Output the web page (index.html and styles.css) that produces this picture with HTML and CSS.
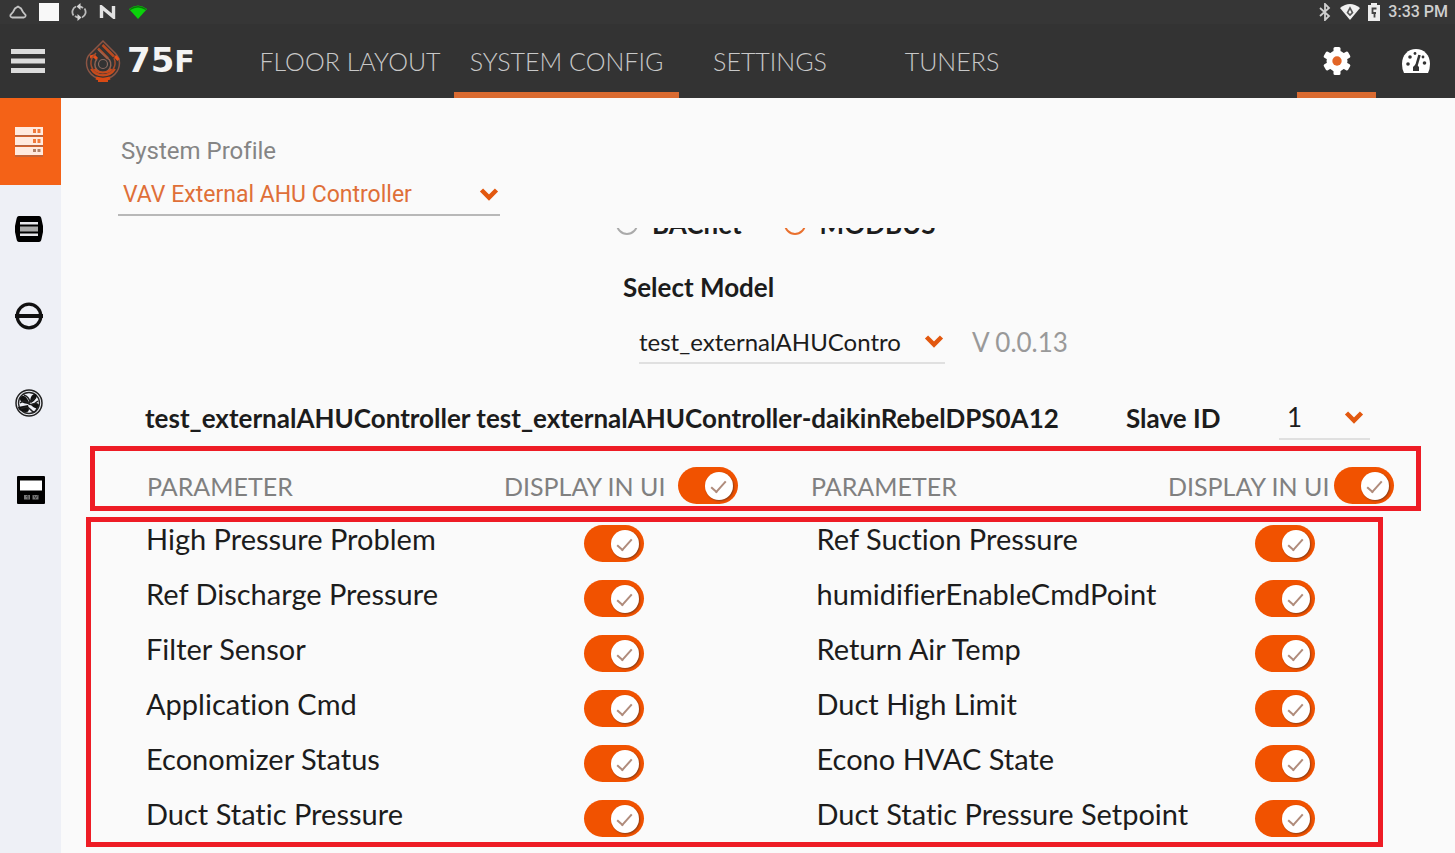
FILE: index.html
```html
<!DOCTYPE html>
<html lang="en">
<head>
<meta charset="utf-8">
<meta name="viewport" content="width=device-width, initial-scale=1">
<title>75F System Config</title>
<link rel="stylesheet" href="styles.css">
</head>
<body>
<div class="app">
  <div class="status">
    <div class="status-left">
      <svg width="18" height="14" viewBox="0 0 18 14" fill="none" stroke="#c4c4c4" stroke-width="1.800"><path d="M3 12.500h12q2-.5 1.500-2.500L14 7 12 3.500 9 1.500 6 3.500 4 7 1.500 10Q1 12 3 12.500z"/></svg>
      <svg width="20" height="18" viewBox="0 0 20 18"><path fill="#f8f8f8" d="M0 0h20v18H0z"/></svg>
      <svg width="16" height="20" viewBox="0 0 16 20"><path d="M5 4.500a6 6 0 0 0-2.500 9M11 15.500a6 6 0 0 0 2.500-9M8 4.500a6 6 0 0 1 4 1.500M8 15.500a6 6 0 0 1-4-1.500" fill="none" stroke="#bbb" stroke-width="1.800"/><path fill="#d5d5d5" d="M9.500 1v7L5.500 4.500zM6.500 12v7l4-3.500z"/></svg>
      <svg width="18" height="14" viewBox="0 0 18 14" fill="none" stroke="#e2e2e2" stroke-width="3.400"><path d="M2.500 13V2l12 10V1"/></svg>
      <svg width="18" height="14" viewBox="0 0 18 14"><path fill="#0bd10b" d="M0 4Q9-3 18 4L9 14z"/><path d="M1 4.500Q9-1 17 4.500" fill="none" stroke="#087808" stroke-width="1.500"/></svg>
    </div>
    <div class="status-right">
      <svg width="14" height="18" viewBox="0 0 14 18" fill="none" stroke="#d0d0d0" stroke-width="1.800"><path d="M2 5l9 8-4 4V1l4 4-9 8"/></svg>
      <svg width="20" height="16" viewBox="0 0 20 16"><path fill="#f0f0f0" d="M0 4Q10-4 20 4L10 16z"/><path fill="none" stroke="#555" stroke-width="1.600" d="M10 4l2.500 4.500L10 11 7.500 8.500z"/></svg>
      <svg width="12" height="18" viewBox="0 0 12 18"><path fill="#ececec" d="M3 0h6v2h3v16H0V2h3z"/><path fill="none" stroke="#444" stroke-width="1.800" d="M8.500 5.500H4.500V10H8M6.500 10v4.500"/></svg>
      <span class="clock">3:33 PM</span>
    </div>
  </div>

  <header class="bar">
    <button class="menu" type="button" aria-label="Menu">
      <svg width="34" height="24" viewBox="0 0 34 24" fill="#dcdcdc"><path d="M0 0h34v5H0zM0 9.500h34v5H0zM0 19h34v5H0z"/></svg>
    </button>
    <div class="brand">
      <svg width="36" height="44" viewBox="0 0 36 44" fill="none">
        <path d="M18 2L4.500 15.500Q1.500 18.500 1.500 24C1.500 33 9 40 18 40s16.500-7 16.500-16q0-5.500-4-9.500z" stroke="#8c5544" stroke-width="1.500"/>
        <path d="M13 9.500l10 10M17.500 6L29 17.500" stroke="#b94a21" stroke-width="2.500"/>
        <path d="M5 18l4-1 3 3M30 17l3.500 4" stroke="#e8501a" stroke-width="3"/>
        <path d="M11 14l-4 5a12 12 0 1 0 22 0" stroke="#a44c2c" stroke-width="1.500"/>
        <path d="M12 20a8 8 0 1 0 12.500 1L13.500 11" stroke="#936352" stroke-width="1.500"/>
        <circle cx="18" cy="25" r="4.500" stroke="#8c6d63" stroke-width="1.200"/>
        <path d="M6 30q4 6.500 12 6.500T30 30M9.500 30q3 3.500 8.500 3.500T26.500 30" stroke="#c94a1b" stroke-width="2"/>
        <path d="M11 39q7 2.500 14 0M13 41.500h10" stroke="#d84a14" stroke-width="3"/>
      </svg>
      <span class="brand-name">75<span class="brand-f">F</span></span>
    </div>
    <nav class="tabs">
      <a class="tab" href="#floor">FLOOR LAYOUT</a>
      <a class="tab tab-wide active" href="#config">SYSTEM CONFIG</a>
      <a class="tab tab-narrow" href="#settings">SETTINGS</a>
      <a class="tab tab-narrow" href="#tuners">TUNERS</a>
    </nav>
    <div class="tools">
      <button class="tool active" type="button" aria-label="Configuration">
        <svg width="28" height="28" viewBox="0 0 28 28"><g fill="#fff"><circle cx="14" cy="14" r="10.500"/><rect x="10.500" y="0" width="7" height="28" rx="1.500"/><rect x="10.500" y="0" width="7" height="28" rx="1.500" transform="rotate(60 14 14)"/><rect x="10.500" y="0" width="7" height="28" rx="1.500" transform="rotate(120 14 14)"/></g><circle cx="14" cy="14" r="4.700" fill="#e26526"/></svg>
      </button>
      <button class="tool" type="button" aria-label="Dashboard">
        <svg width="28" height="24" viewBox="0 0 28 24"><path fill="#fff" d="M2 24Q0 20 0 15C0 6 6 0 14 0s14 6 14 15q0 5-2 9z"/><g fill="#333"><circle cx="6" cy="15" r="1.800"/><circle cx="8" cy="8" r="1.800"/><circle cx="13" cy="4.500" r="1.400"/><circle cx="22.500" cy="14" r="1.800"/><circle cx="21" cy="8" r="1.400"/><path d="M11 22v-4l3-3 3 3v4z"/></g><path d="M14 18l3.500-12" stroke="#333" stroke-width="2.600"/></svg>
      </button>
    </div>
  </header>

  <div class="body">
    <nav class="side" aria-label="Sections">
      <button class="side-item active" type="button" aria-label="System">
        <svg width="28" height="30" viewBox="0 0 28 30"><g fill="#ffeade"><rect y="0" width="28" height="8"/><rect y="10" width="28" height="8"/><rect y="20" width="28" height="8"/></g><path d="M0 29h28M0 8.800h28M0 18.800h28" stroke="#b36442" stroke-width="1.500"/><g fill="#f07a3c"><path d="M18 2h3v4h-3zM22.500 2h3v4h-3zM18 12h3v4h-3zM22.500 12h3v4h-3z"/><path fill="#b08068" d="M18 22h3v3h-3zM22.500 22h3v3h-3z"/></g></svg>
      </button>
      <button class="side-item" type="button" aria-label="Module">
        <svg width="28" height="26" viewBox="0 0 28 26"><path d="M4 0h20q2 0 2.500 3l1.500 7v6l-1.500 7q-.5 3-2.500 3H4q-2 0-2.500-3L0 16v-6l1.500-7Q2 0 4 0z"/><path fill="#e8e8ec" d="M5 6h18v2.500H5zM5 17.500h18V20H5z"/><path fill="#aaa" d="M5 10.500h18v5H5z"/></svg>
      </button>
      <button class="side-item" type="button" aria-label="Damper">
        <svg width="28" height="28" viewBox="0 0 28 28" fill="none" stroke="#111"><circle cx="14" cy="14" r="11.800" stroke-width="3.200"/><path d="M0 14h28" stroke-width="4"/></svg>
      </button>
      <button class="side-item" type="button" aria-label="Fan">
        <svg width="28" height="28" viewBox="0 0 28 28" fill="none" stroke="#222"><circle cx="14" cy="14" r="13" stroke-width="1.500"/><circle cx="14" cy="14" r="10.500" stroke-width="1.300"/><path fill="#111" stroke="none" d="M14 13Q9 3 5 9q-1 5 8 6zM15 12q1-8 6-7 3 4-5 9zM16 15q8-3 8 2-2 5-8-1zM13 16q3 8-3 7-7-1-7-5z"/><path d="M5 14q5-4 8 0t10-2M6 20q6-4 10 1t6-2M9 6q5 2 6 7M20 9l-6 5" stroke-width="1.500"/></svg>
      </button>
      <button class="side-item side-item-last" type="button" aria-label="Meter">
        <svg width="28" height="28" viewBox="0 0 28 28"><rect width="28" height="28" rx="1"/><rect x="3" y="4.500" width="22" height="10" fill="#fff"/><path fill="#777" d="M7 19h6v4.500H7zM15.500 19h6v4.500h-6z"/><path d="M9 21l2-1.500v4M17 19.500l1.500 3 2-3" fill="none" stroke="#333"/></svg>
      </button>
    </nav>

    <main class="main">
      <div class="profile">
        <label class="profile-label" for="profile">System Profile</label>
        <div class="pick pick-profile">
          <select id="profile"><option>VAV External AHU Controller</option></select>
          <svg class="chev" width="20" height="14" viewBox="0 0 20 14"><path d="M2.500 3L10 10.500 17.500 3" fill="none" stroke="#e2580f" stroke-width="4.500"/></svg>
        </div>
      </div>

      <div class="scroll">
        <div class="protocol">
          <label class="radio"><input type="radio" name="protocol">BACnet</label>
          <label class="radio"><input type="radio" name="protocol" checked>MODBUS</label>
        </div>
        <div class="model">
          <label class="strong" for="model">Select Model</label>
          <div class="model-row">
            <div class="pick pick-model">
              <select id="model"><option>test_externalAHUContro</option></select>
              <svg class="chev" width="20" height="14" viewBox="0 0 20 14"><path d="M2.500 3L10 10.500 17.500 3" fill="none" stroke="#e2580f" stroke-width="4.500"/></svg>
            </div>
            <span class="version">V 0.0.13</span>
          </div>
        </div>
        <div class="device">
          <h2 class="strong device-name">test_externalAHUController test_externalAHUController-daikinRebelDPS0A12</h2>
          <label class="strong slave" for="slave">Slave ID</label>
          <div class="pick pick-slave">
            <select id="slave"><option>1</option></select>
            <svg class="chev" width="20" height="14" viewBox="0 0 20 14"><path d="M2.500 3L10 10.500 17.500 3" fill="none" stroke="#e2580f" stroke-width="4.500"/></svg>
          </div>
        </div>

        <div class="heads">
          <span>PARAMETER</span>
          <span class="all"><label for="all-a">DISPLAY IN UI</label><input class="toggle" id="all-a" type="checkbox" checked></span>
          <span>PARAMETER</span>
          <span class="all all-tight"><label for="all-b">DISPLAY IN UI</label><input class="toggle" id="all-b" type="checkbox" checked></span>
        </div>

        <div class="params">
          <label for="p1">High Pressure Problem</label><input class="toggle" id="p1" type="checkbox" checked>
          <label for="p2">Ref Suction Pressure</label><input class="toggle" id="p2" type="checkbox" checked>
          <label for="p3">Ref Discharge Pressure</label><input class="toggle" id="p3" type="checkbox" checked>
          <label for="p4">humidifierEnableCmdPoint</label><input class="toggle" id="p4" type="checkbox" checked>
          <label for="p5">Filter Sensor</label><input class="toggle" id="p5" type="checkbox" checked>
          <label for="p6">Return Air Temp</label><input class="toggle" id="p6" type="checkbox" checked>
          <label for="p7">Application Cmd</label><input class="toggle" id="p7" type="checkbox" checked>
          <label for="p8">Duct High Limit</label><input class="toggle" id="p8" type="checkbox" checked>
          <label for="p9">Economizer Status</label><input class="toggle" id="p9" type="checkbox" checked>
          <label for="p10">Econo HVAC State</label><input class="toggle" id="p10" type="checkbox" checked>
          <label for="p11">Duct Static Pressure</label><input class="toggle" id="p11" type="checkbox" checked>
          <label for="p12">Duct Static Pressure Setpoint</label><input class="toggle" id="p12" type="checkbox" checked>
        </div>
      </div>
    </main>
  </div>
</div>
</body>
</html>
```
FILE: styles.css
```css
* { box-sizing: border-box; }
body { margin: 0; background: #fafafa; color: #1c1c1c; font-family: Lato, "Liberation Sans", sans-serif; font-variant-ligatures: none; }
svg { display: block; flex: none; }
button { margin: 0; padding: 0; border: 0; background: none; font: inherit; }
.app { display: flex; flex-direction: column; min-height: 100vh; }

.status { display: flex; justify-content: space-between; align-items: center; height: 24px; padding: 0 7px 0 9px; background: #363636; }
.status-left { display: flex; align-items: center; gap: 12px; }
.status-right { display: flex; align-items: center; gap: 8px; }
.clock { color: #cfcfcf; font: 500 16px/24px Roboto, sans-serif; }

.bar { display: flex; align-items: stretch; height: 74px; background: #333; }
.menu { width: 34px; margin-left: 11px; }
.brand { display: flex; align-items: center; gap: 6px; width: 161px; margin-left: 40px; }
.brand-name { color: #f4f4f4; font: 700 34px/40px "DejaVu Sans", sans-serif; }
.brand-f { font-size: 30px; }
.tabs { display: flex; flex: 1; }
.tab { display: flex; align-items: center; justify-content: center; width: 208px; border-top: 6px solid transparent; border-bottom: 6px solid transparent; color: #c8c8c8; font-size: 25px; font-weight: 300; text-decoration: none; white-space: nowrap; }
.tab-wide { width: 225px; }
.tab-narrow { width: 182px; }
.tools { display: flex; }
.tool { display: flex; align-items: center; justify-content: center; width: 79px; border-top: 6px solid transparent; border-bottom: 6px solid transparent; }
.tab.active, .tool.active { border-bottom-color: #d96a30; }

.body { display: flex; flex: 1; }
.side { display: flex; flex-direction: column; width: 61px; background: #eef0f6; }
.side-item { display: flex; align-items: center; height: 87px; padding-left: 15px; }
.side-item-last { padding-left: 17px; }
.side-item.active { background: #f46217; }

.main { flex: 1; min-width: 0; }
.profile { display: flex; flex-direction: column; padding: 37px 0 12px 57px; font-family: Roboto, sans-serif; }
.profile-label { padding-left: 3px; color: #858585; font-size: 24px; line-height: 32px; }
.pick { position: relative; border-bottom: 2px solid #e0e0e0; }
.pick select { display: block; width: 100%; height: 100%; margin: 0; padding: 0; border: 0; background: none; appearance: none; color: inherit; font: inherit; }
.chev { position: absolute; right: 1px; top: 50%; margin-top: -7px; pointer-events: none; }
.pick-profile { width: 382px; height: 42px; margin-top: 7px; padding-left: 5px; border-color: #b8b8b8; color: #df6f38; font-size: 23px; }

.scroll { overflow: hidden; }
.protocol { display: flex; gap: 42px; margin-top: -22px; padding-left: 555px; font-size: 26px; font-weight: 700; line-height: 36px; }
.radio { display: flex; align-items: center; gap: 14px; }
.radio input { width: 22px; height: 22px; margin: 0; border: 2px solid #aaa; border-radius: 50%; appearance: none; }
.radio input:checked { border-color: #e9702e; }
.strong { margin: 0; font-size: 26px; font-weight: 700; line-height: 32px; white-space: nowrap; }
.model { padding: 29px 0 0 562px; }
.model-row { display: flex; align-items: center; gap: 27px; padding: 17px 0 0 16px; font-size: 26px; }
.pick-model { width: 306px; height: 44px; font-size: 24px; }
.version { color: #999; }
.device { display: flex; align-items: center; height: 82px; padding: 26px 0 0 84px; }
.device-name { width: 981px; }
.slave { width: 153px; }
.pick-slave { width: 91px; height: 44px; padding-left: 8px; font-size: 26px; }
.pick-slave .chev { right: 6px; }

.heads { display: grid; grid-template-columns: 357fr 307fr 357fr 248fr; align-items: center; height: 65px; margin: 0 34px 6px 29px; padding: 14px 0 0 52px; border: 5px solid #ee1c25; color: #808080; font-size: 25px; }
.all { display: flex; align-items: center; gap: 12px; white-space: nowrap; }
.all-tight { gap: 4px; }
.params { display: grid; grid-template-columns: 438fr 232fr 438fr 123fr; gap: 18px 0; margin: 0 72px 0 25px; padding: 3px 0 5px 55px; border: 5px solid #ee1c25; font-size: 29px; line-height: 28px; }
.params label { white-space: nowrap; }

.toggle { position: relative; width: 60px; height: 37px; margin: 0; border-radius: 19px; background: #f15200; appearance: none; }
.toggle::before { content: ""; position: absolute; top: 5px; right: 5px; width: 28px; height: 28px; border-radius: 50%; background: #fff; box-shadow: 1px 1px 2px #8d3c12; }
.toggle::after { content: ""; position: absolute; top: 14px; right: 12px; width: 13px; height: 6px; border: solid #b08c7c; border-width: 0 0 2px 2px; transform: rotate(-48deg); }
```
